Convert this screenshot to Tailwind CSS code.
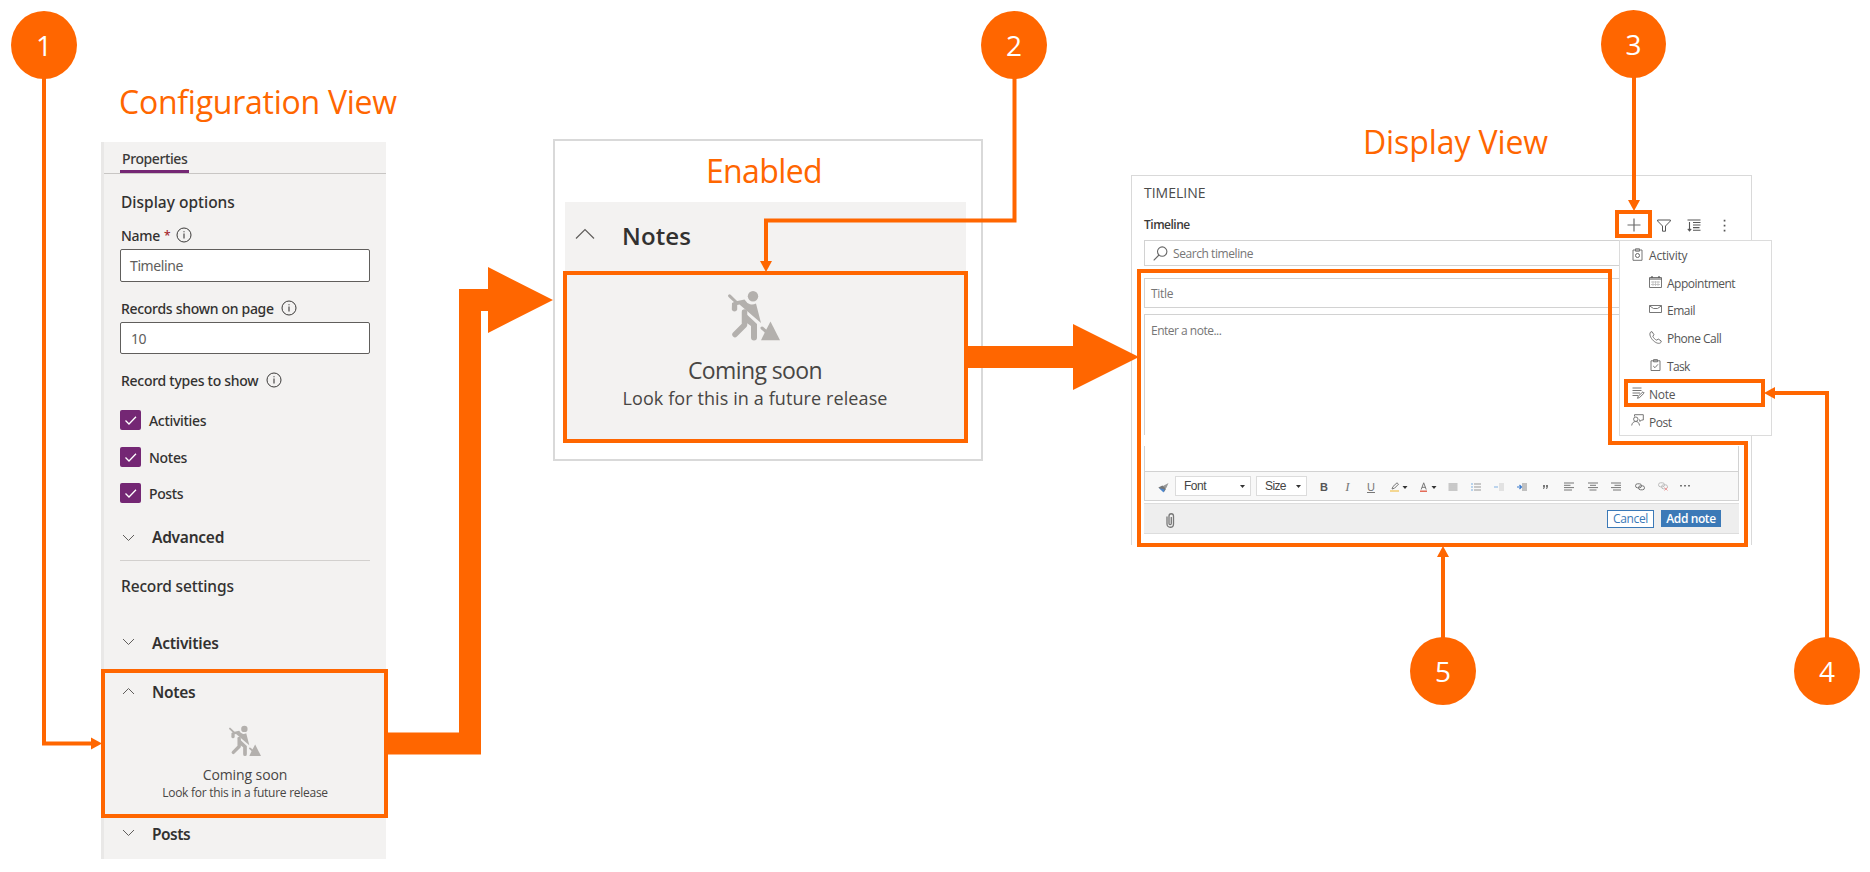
<!DOCTYPE html>
<html lang="en">
<head>
<meta charset="utf-8">
<title>Timeline notes</title>
<script src="https://cdn.jsdelivr.net/npm/@tailwindcss/browser@4"></script>
</head>
<body class="bg-white">
<!-- shared symbols -->
<svg class="hidden">
  <symbol id="worker" viewBox="0 0 52 50">
    <g fill="currentColor" stroke="currentColor" stroke-linejoin="round" stroke-linecap="round">
      <circle cx="25" cy="5.3" r="5.2" stroke="none"/>
      <path d="M1.6 4.8 8 11" stroke-width="3" fill="none"/>
      <path d="M4 12 7 10.500 16.500 8.500Q19 12.500 22 13.200 25 14 28 12.500L33 32 11.500 13.500 9.200 14V18.500A2.800 2.800 0 0 1 3.800 18.500Z" stroke="none"/>
      <path d="M16.500 21V34L7 43.500" stroke-width="5.500" fill="none"/>
      <path d="M14 19 29 33V46.500A3 3 0 0 1 23 46.500V35L16 30Z" stroke="none"/>
      <path d="M34 37 38 40.500" stroke-width="3" fill="none"/>
      <path d="M42.500 30.500 52 49.300H33L37 41Z" stroke="none"/>
    </g>
  </symbol>
  <symbol id="info" viewBox="0 0 16 16">
    <circle cx="8" cy="8" r="7" fill="none" stroke="#3b3a39"/>
    <path d="M8 6.500V11.500M8 4.200V5.300" stroke="#3b3a39" stroke-width="1.100"/>
  </symbol>
  <symbol id="down" viewBox="0 0 13 8"><path d="M1 1 6.500 6.500 12 1" fill="none" stroke="#605e5c"/></symbol>
  <symbol id="up" viewBox="0 0 13 8"><path d="M1 7 6.500 1.500 12 7" fill="none" stroke="#605e5c"/></symbol>
  <symbol id="check" viewBox="0 0 20 20"><path d="M5 10.500 8.500 14 15.500 6.800" fill="none" stroke="#fff" stroke-width="1.300"/></symbol>
</svg>

<main class="relative w-[1870px] h-[872px] overflow-hidden font-['Open_Sans',sans-serif] text-[#323130] leading-none whitespace-nowrap">

  <!-- configuration view -->
  <section class="absolute left-[101px] top-[84px] w-[285px]">
    <h2 class="h-[35px] pl-[18px] flex items-center text-[32px] tracking-[-0.25px] text-[#ff6600]">Configuration View</h2>
    <div class="mt-[23px] h-[717px] bg-[#f3f2f1] border-l-3 border-[#e9e8e7] flex flex-col text-sm leading-none font-medium font-['Noto_Sans',sans-serif]">
      <div class="h-[32px] shrink-0 border-b border-[#c8c6c4] pl-4">
        <div class="w-[69px] h-[31px] border-b-3 border-[#742774] flex items-center pl-[2px] pt-[5px] text-[#3b3a39] tracking-[-0.4px]">Properties</div>
      </div>
      <div class="px-4 flex flex-col">
        <div class="h-[56px] pl-px pt-[2px] flex items-center text-[15.5px]">Display options</div>
        <div class="h-[12px] mb-[7px] pl-px flex items-center tracking-[-0.3px]">Name<span class="text-[#a4262c] text-xs ml-[4px]">*</span><svg class="w-4 h-4 ml-[6px] -mt-[3px]"><use href="#info"/></svg></div>
        <div class="h-[33px] border border-[#605e5c] rounded-[2px] bg-white flex items-center pl-[9px] pt-px font-normal text-[#605e5c] tracking-[-0.4px]">Timeline</div>
        <div class="h-[19px] mt-[17px] mb-[4px] pl-px flex items-center tracking-[-0.3px]">Records shown on page<svg class="w-4 h-4 ml-[7px] -mt-[2px]"><use href="#info"/></svg></div>
        <div class="h-[32px] border border-[#605e5c] rounded-[2px] bg-white flex items-center pl-[10px] pt-[2px] font-normal text-[#605e5c] tracking-[-0.4px]">10</div>
        <div class="h-[18px] mt-[18px] mb-[20px] pl-px flex items-center tracking-[-0.28px]">Record types to show<svg class="w-4 h-4 ml-[8px] -mt-[2px]"><use href="#info"/></svg></div>
        <div class="h-[36.5px] flex items-start gap-2"><svg class="w-[21px] h-[20px] bg-[#742774] rounded-[2px]"><use href="#check"/></svg><span class="leading-[22px] tracking-[-0.3px]">Activities</span></div>
        <div class="h-[36.5px] flex items-start gap-2"><svg class="w-[21px] h-[20px] bg-[#742774] rounded-[2px]"><use href="#check"/></svg><span class="leading-[22px] tracking-[-0.3px]">Notes</span></div>
        <div class="h-[36.5px] flex items-start gap-2"><svg class="w-[21px] h-[20px] bg-[#742774] rounded-[2px]"><use href="#check"/></svg><span class="leading-[22px] tracking-[-0.4px]">Posts</span></div>
        <div class="h-[36px] flex items-center pl-[2px] text-[15.5px] font-semibold tracking-[-0.25px]"><svg class="w-[13px] h-2 mr-[17px]"><use href="#down"/></svg>Advanced</div>
        <div class="mt-1 h-[1.5px] bg-[#d2d0ce]"></div>
        <div class="h-[51px] mb-[6px] pl-px flex items-center text-[15.5px] tracking-[-0.15px]">Record settings</div>
        <div class="h-[51px] flex items-center pl-[2px] text-[15.5px] font-semibold tracking-[-0.25px]"><svg class="w-[13px] h-2 mr-[17px] -mt-1"><use href="#down"/></svg>Activities</div>
        <div class="h-[149px] flex flex-col">
          <div class="h-[46px] flex items-center pl-[2px] pt-px text-[15.5px] font-semibold tracking-[-0.3px]"><svg class="w-[13px] h-2 mr-[17px] -mt-1"><use href="#up"/></svg>Notes</div>
          <div class="flex flex-col items-center font-normal text-[#484644] font-['Open_Sans',sans-serif]">
            <svg class="w-8 h-8 mt-[10px] text-[#b3b0ad]"><use href="#worker"/></svg>
            <div class="mt-[10px] leading-[16px] tracking-[-0.1px]">Coming soon</div>
            <div class="mt-[2px] leading-[16px] text-xs tracking-[-0.27px]">Look for this in a future release</div>
          </div>
        </div>
        <div class="h-[33px] flex items-center pl-[2px] text-[15.5px] font-semibold tracking-[-0.5px]"><svg class="w-[13px] h-2 mr-[17px] -mt-1"><use href="#down"/></svg>Posts</div>
      </div>
    </div>
  </section>

  <!-- enabled state -->
  <section class="absolute left-[553px] top-[139px] w-[430px] h-[322px] border-2 border-[#d9d9d9] flex flex-col pl-[10px] pr-[15px]">
    <h2 class="h-[61px] pr-[3px] pb-[2px] flex items-center justify-center text-[32px] tracking-[-0.6px] text-[#ff6600]">Enabled</h2>
    <div class="h-[70px] bg-[#f3f2f1] pl-[10px] pb-[2px] flex items-center text-2xl leading-none font-semibold tracking-[0.1px]">
      <svg class="w-[20px] h-[12px] mr-[27px] -mt-[4px]" viewBox="0 0 20 12"><path d="M1 10.500 10 1.500 19 10.500" fill="none" stroke="#605e5c" stroke-width="1.200"/></svg>Notes
    </div>
    <div class="h-[168px] bg-[#f3f2f1] pr-[21px] flex flex-col items-center text-[#484644]">
      <svg class="w-[52px] h-[50px] mt-[19px] mr-[2px] text-[#b3b0ad]"><use href="#worker"/></svg>
      <div class="mt-[16px] leading-[26px] text-[23px] tracking-[-0.6px]">Coming soon</div>
      <div class="mt-[4px] leading-[22px] text-[18px] tracking-[0.1px]">Look for this in a future release</div>
    </div>
  </section>

  <!-- display view -->
  <section class="absolute left-[1131px] top-[124px] w-[621px]">
    <h2 class="h-[36px] ml-[232px] flex items-center text-[32px] tracking-[-0.1px] text-[#ff6600]">Display View</h2>
    <div class="mt-[15px] h-[370px] border border-b-0 border-[#d9d9d9] px-3 flex flex-col text-xs text-[#767676]">
      <div class="h-[35px] shrink-0 pb-[2px] flex items-center text-sm leading-none text-[#4a4a4a]">TIMELINE</div>
      <div class="h-[29px] shrink-0 pb-px flex items-center text-[#3b3a39]">
        <span class="font-semibold tracking-[-0.5px]">Timeline</span>
        <div class="ml-auto mr-[13px] flex items-center gap-[22px]">
          <svg class="w-[14px] h-[14px] -mr-px" viewBox="0 0 14 14"><path d="M7 .5V13.500M.5 7H13.500" stroke="#6b6b6b" stroke-width="1.200"/></svg>
          <svg class="w-[14px] h-[13px] -ml-[5px]" viewBox="0 0 14 13"><path d="M.6 1H13.400V2L8.500 7V12.200H5.500V7L.6 2Z" fill="none" stroke="#555"/></svg>
          <svg class="w-[14px] h-[13px] -ml-[6px]" viewBox="0 0 14 13"><path d="M.5 1H13.500M2.500 3V11.500M.8 9.800 2.500 11.800 4.200 9.800M6 3.500H13.500M6 6H13.500M6 8.600H12.500M6 11.200H13.500" fill="none" stroke="#555" stroke-width="1.100"/></svg>
          <svg class="w-[3px] h-[13px]" viewBox="0 0 3 13"><path d="M.7.7h1.700v1.700H.7zM.7 5.700h1.700v1.700H.7zM.7 10.700h1.700v1.700H.7z" fill="#555"/></svg>
        </div>
      </div>
      <div class="h-[26px] shrink-0 border border-[#d2d2d2] pl-2 pt-[2px] flex items-center tracking-[-0.43px]">
        <svg class="w-[15px] h-[15px] mr-[5px] -mt-[2px]" viewBox="0 0 15 15"><path d="M.7 14.300 6 9" stroke="#666" stroke-width="1.100"/><circle cx="9.200" cy="5.600" r="4.700" fill="none" stroke="#666" stroke-width="1.100"/></svg>Search timeline
      </div>
      <div class="mt-3 h-[30px] shrink-0 border border-[#d2d2d2] pl-[6px] pt-px flex items-center tracking-[-0.3px]">Title</div>
      <div class="mt-[6px] h-[121px] shrink-0 border border-b-0 border-[#d2d2d2] pl-[6px] pt-[9px] leading-[14px] tracking-[-0.5px]">Enter a note...</div>
      <div class="mt-[11px] h-[25px] shrink-0 border-x border-[#d2d2d2]"></div>

      <!-- editor toolbar -->
      <div class="h-[30px] shrink-0 bg-[#f8f8f8] border border-[#d2d2d2] flex items-center text-[#444] font-['Liberation_Sans',sans-serif] pl-[13px]">
        <svg class="w-[11px] h-[10px] mr-[6px] mt-[3px]" viewBox="0 0 11 10"><path d="M5 3 10.500 0 8.500 4.500 6 7Z" fill="#9a9a9a"/><path d="M.3 4.500 4.500 2.500 8 6 6 9Z" fill="#777"/><path d="M1 5 6.800 6.500 5.500 9.500Z" fill="#4a86cf"/></svg>
        <div class="w-[76px] h-5 bg-white border border-[#dcdcdc] flex items-center justify-between pl-2 pr-[5px] tracking-[-0.5px]">Font<svg class="w-[5px] h-[3px]" viewBox="0 0 5 3"><path d="M0 0H5L2.500 3Z" fill="#333"/></svg></div>
        <div class="w-[51px] h-5 ml-[5px] bg-white border border-[#dcdcdc] flex items-center justify-between pl-2 pr-[5px] tracking-[-0.6px]">Size<svg class="w-[5px] h-[3px]" viewBox="0 0 5 3"><path d="M0 0H5L2.500 3Z" fill="#333"/></svg></div>
        <div class="flex items-center pt-[2px]">
        <b class="w-[24px] ml-[5px] text-center text-[11px] text-[#555]">B</b>
        <i class="w-[23px] text-center font-['Liberation_Serif',serif] text-[13px] text-[#777]">I</i>
        <span class="w-[24px] text-center underline text-[11px] text-[#777]">U</span>
        <svg class="w-[18px] h-[10px] ml-[7px]" viewBox="0 0 18 10"><path d="M2 7 3 4.500 7 .8 8.500 2.200 4.500 6.200Z" fill="none" stroke="#777"/><path d="M0 9H9" stroke="#f2c45a" stroke-width="1.300"/><path d="M12.500 4H17.500L15 7Z" fill="#333"/></svg>
        <svg class="w-[18px] h-[10px] ml-[12px]" viewBox="0 0 18 10"><path d="M1.200 7.500 3.700.8 6.200 7.500M2 5.300H5.500" fill="none" stroke="#777"/><path d="M0 9.200H7" stroke="#e0533d" stroke-width="1.300"/><path d="M11.500 4H16.500L14 7Z" fill="#333"/></svg>
        <svg class="w-[10px] h-[8px] ml-[10px]" viewBox="0 0 10 8"><path d="M.5 1H9.500M.5 3H9.500M.5 5H9.500M.5 7H9.500" stroke="#999"/></svg>
        <svg class="w-[10px] h-[8px] ml-[13px]" viewBox="0 0 10 8"><path d="M1 0V8" stroke="#7aaee0" stroke-dasharray="2 1"/><path d="M3 1H10M3 4H10M3 7H10" stroke="#999"/></svg>
        <svg class="w-[10px] h-[8px] ml-[13px] opacity-45" viewBox="0 0 10 8"><path d="M0 4H4" stroke="#4a90d9" stroke-width="1.500"/><path d="M5 1H10M5 3H10M5 5H10M5 7H10" stroke="#999"/></svg>
        <svg class="w-[10px] h-[8px] ml-[13px]" viewBox="0 0 10 8"><path d="M0 4H4M2.500 2 4.500 4 2.500 6" stroke="#3a7bd0" fill="none" stroke-width="1.200"/><path d="M5 1H10M5 3H10M5 5H10M5 7H10" stroke="#888"/></svg>
        <svg class="w-[5px] h-[4px] ml-[16px]" viewBox="0 0 5 4"><path d="M0 0H2V2L1 4H0L.5 2H0ZM3 0H5V2L4 4H3L3.500 2H3Z" fill="#777"/></svg>
        <svg class="w-[10px] h-[9px] ml-[16px]" viewBox="0 0 10 9"><path d="M0 1H10M0 3.300H6.500M0 5.600H10M0 8H8" stroke="#777"/></svg>
        <svg class="w-[10px] h-[9px] ml-[14px]" viewBox="0 0 10 9"><path d="M0 1H10M2 3.300H8M0 5.600H10M1.500 8H8.500" stroke="#777"/></svg>
        <svg class="w-[10px] h-[9px] ml-[13px]" viewBox="0 0 10 9"><path d="M0 1H10M3.500 3.300H10M0 5.600H10M2 8H10" stroke="#777"/></svg>
        <svg class="w-[10px] h-[8px] ml-[14px]" viewBox="0 0 10 8"><rect x=".5" y=".8" width="6" height="4" rx="2" fill="none" stroke="#777"/><rect x="3.500" y="2.800" width="6" height="4" rx="2" fill="none" stroke="#777"/></svg>
        <svg class="w-[11px] h-[9px] ml-[13px]" viewBox="0 0 11 9"><g opacity=".45"><rect x=".5" y=".8" width="6" height="4" rx="2" fill="none" stroke="#777"/><rect x="3.500" y="2.800" width="6" height="4" rx="2" fill="none" stroke="#777"/><path d="M6.500 5.500 9.500 8.500M9.500 5.500 6.500 8.500" stroke="#d33"/></g></svg>
        <svg class="w-[10px] h-[2px] ml-[11px] -mt-[2px]" viewBox="0 0 10 2"><path d="M0 0H2V1.500H0ZM4 0H6V1.500H4ZM8 0H10V1.500H8Z" fill="#777"/></svg>
        </div>
      </div>

      <!-- attachment and actions -->
      <div class="mt-[2px] h-[31px] shrink-0 bg-[#eee] border-y border-[#ddd] pl-[22px] pr-[18px] flex items-center">
        <svg class="w-[9px] h-[15px] mt-[3px]" viewBox="0 0 9 15"><path d="M1 3.500V11A3 3 0 0 0 7.500 11V3A2.200 2.200 0 0 0 3 3V10.500A1.100 1.100 0 0 0 5.300 10.500V4" fill="none" stroke="#777" stroke-width="1.300"/></svg>
        <button class="ml-auto w-[47px] h-[18px] border border-[#3b79b7] bg-white text-[#3b79b7] tracking-[-0.35px] leading-[16px]">Cancel</button>
        <button class="ml-[7px] w-[60px] h-[17px] bg-[#3b79b7] text-white font-semibold tracking-[-0.4px] leading-[17px]">Add note</button>
      </div>
    </div>
  </section>

  <!-- add-record menu -->
  <nav class="absolute left-[1619px] top-[240px] w-[153px] h-[196px] bg-white border border-[#dcdcdc] pt-[1px] pl-3 text-xs leading-none text-[#555]">
    <div class="h-[27.750px] flex items-center tracking-[-0.2px]"><svg class="w-[11px] h-[13px] mr-[6px] -mt-[3px]" viewBox="0 0 11 13"><path d="M1 2H10V12.300H1Z M3.500.8H7.500V3.200H3.500Z" fill="none" stroke="#777"/><circle cx="5.500" cy="7.500" r="2" fill="none" stroke="#666"/></svg>Activity</div>
    <div class="h-[27.750px] flex items-center pl-[17px] tracking-[-0.5px]"><svg class="w-[13px] h-[12px] mr-[5px] -mt-[4px]" viewBox="0 0 13 12"><path d="M.5 1.500H12.500V11.500H.5Z" fill="none" stroke="#777"/><path d="M.5 3H12.500M3 0V2M10 0V2" stroke="#555" stroke-width="1.200"/><path d="M2 6H11M2 8.500H11M4 5V10M6.500 5V10M9 5V10" stroke="#bbb" stroke-width=".8"/></svg>Appointment</div>
    <div class="h-[27.750px] flex items-center pl-[17px] tracking-[-0.5px]"><svg class="w-[13px] h-[8px] mr-[5px] -mt-[4px]" viewBox="0 0 13 8"><path d="M.5.5H12.500V7.500H.5Z M.5.8 4.500 3.500H8.500L12.500.8" fill="none" stroke="#777"/></svg>Email</div>
    <div class="h-[27.750px] flex items-center pl-[17px] tracking-[-0.5px]"><svg class="w-[13px] h-[13px] mr-[5px] -mt-[4px]" viewBox="0 0 13 13"><path d="M1.500 1.200 3 .6 5 3.800 3.800 5.200C4.500 7 6 8.500 7.800 9.200L9.200 8 12.300 10 11.800 11.500C10.500 13 7.500 12.500 4.500 9.800 1.500 7 0 3.300 1.500 1.200Z" fill="none" stroke="#777"/></svg>Phone Call</div>
    <div class="h-[27.750px] flex items-center pl-[17px] tracking-[-0.7px]"><svg class="w-[11px] h-[12px] ml-px mr-[6px] -mt-[3px]" viewBox="0 0 11 12"><path d="M1 1.800H10V11.500H1Z M3.500.6H7.500V2.800H3.500Z M3.200 7 5 8.700 8 5.300" fill="none" stroke="#777"/></svg>Task</div>
    <div class="h-[27.750px] flex items-center tracking-[-0.3px]"><svg class="w-[13px] h-[12px] mr-[4px] -mt-[3px]" viewBox="0 0 13 12"><path d="M.5 1H9.500M.5 3.500H9.500M.5 6H8M.5 8.500H6" stroke="#777"/><path d="M5.500 11.300 6.200 9.200 11 4.800 12.200 6 7.600 10.500Z" fill="#fff" stroke="#666" stroke-width=".9"/></svg>Note</div>
    <div class="h-[27.750px] flex items-center pt-px tracking-[-0.5px]"><svg class="w-[13px] h-[12px] -ml-px mr-[5px] -mt-[5px]" viewBox="0 0 13 12"><path d="M3.500 2.500V.7H12.300V6H10.500L9 7.500V6H8" fill="none" stroke="#777"/><circle cx="4.800" cy="5.200" r="2.200" fill="none" stroke="#777"/><path d="M.7 11.500C1 8.800 2.800 7.500 4.800 7.500S8.200 8.800 8.500 11.500" fill="none" stroke="#777"/></svg>Post</div>
  </nav>

  <!-- highlight frames and connectors -->
  <svg class="absolute inset-0 w-[1870px] h-[872px] pointer-events-none" viewBox="0 0 1870 872">
    <g fill="none" stroke="#ff6600" stroke-width="4">
      <path d="M103 671H386V816H103Z"/>
      <path d="M565 273H966V441H565Z"/>
      <path d="M1139 271H1610V443H1746V545H1139Z"/>
      <path d="M1617 212H1650V236H1617Z"/>
      <path d="M1626 381H1763V405H1626Z"/>
      <path d="M44 70V743.500H92"/>
      <path d="M1014.500 70V220.500H766V262"/>
      <path d="M1634 70V201"/>
      <path d="M1827 650V393H1774"/>
      <path d="M1443 650V556"/>
    </g>
    <g fill="#ff6600">
      <path d="M91 737.500 102 743.500 91 749.500Z"/>
      <path d="M760 261H772L766 272Z"/>
      <path d="M1628 200H1640L1634 211Z"/>
      <path d="M1775 387V399L1764 393Z"/>
      <path d="M1437 557H1449L1443 546Z"/>
      <path d="M388 732.500H459V289H488V267L553 300 488 333V311H481V754.500H388Z"/>
      <path d="M968 346H1073V324L1139 357 1073 390V368H968Z"/>
    </g>
  </svg>

  <!-- numbered callouts -->
  <div class="absolute left-[11px] top-[11px] w-[66px] h-[68px] rounded-[50%] bg-[#ff6600] text-white text-[28px] flex items-center justify-center">1</div>
  <div class="absolute left-[981px] top-[11px] w-[66px] h-[68px] rounded-[50%] bg-[#ff6600] text-white text-[28px] flex items-center justify-center">2</div>
  <div class="absolute left-[1601px] top-[10px] w-[65px] h-[68px] rounded-[50%] bg-[#ff6600] text-white text-[28px] flex items-center justify-center">3</div>
  <div class="absolute left-[1794px] top-[637px] w-[66px] h-[68px] rounded-[50%] bg-[#ff6600] text-white text-[28px] flex items-center justify-center">4</div>
  <div class="absolute left-[1410px] top-[637px] w-[66px] h-[68px] rounded-[50%] bg-[#ff6600] text-white text-[28px] flex items-center justify-center">5</div>
</main>
</body>
</html>
